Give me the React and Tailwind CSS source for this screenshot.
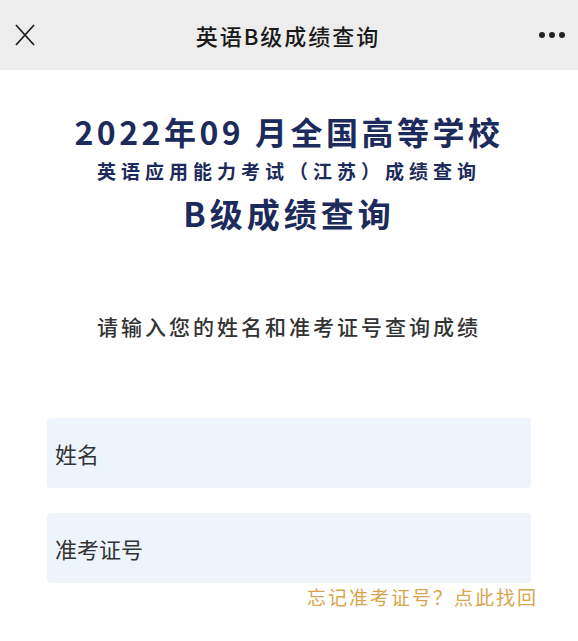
import React from "react";

const cjk = { fontFamily: '"Noto Sans CJK SC", "Noto Sans", sans-serif' };

export default function App() {
  return (
    <div className="w-[578px] h-[641px] bg-white overflow-hidden" style={cjk}>
      {/* top bar */}
      <div className="h-[70px] bg-[#ededed] flex items-center justify-between px-3">
        <svg width="24" height="24" viewBox="0 0 24 24" className="ml-[1px]">
          <path d="M3 2 L21 22 M21 2 L3 22" stroke="#222" strokeWidth="1.8" fill="none" />
        </svg>
        <div className="text-[22px] tracking-[2px] text-[#1a1a1a] font-medium">英语B级成绩查询</div>
        <div className="flex gap-[4px] items-center mr-[1px]">
          <span className="w-[6px] h-[6px] rounded-full bg-[#222]"></span>
          <span className="w-[6px] h-[6px] rounded-full bg-[#222]"></span>
          <span className="w-[6px] h-[6px] rounded-full bg-[#222]"></span>
        </div>
      </div>

      {/* heading */}
      <div className="flex flex-col items-center text-[#1c2a5c] font-bold">
        <div className="mt-[41px] text-[32px] leading-[40px] tracking-[3.5px]">2022年09 月全国高等学校</div>
        <div className="mt-[6px] text-[19px] leading-[28px] tracking-[5px]">英语应用能力考试（江苏）成绩查询</div>
        <div className="mt-[8px] text-[33px] leading-[40px] tracking-[4px]">B级成绩查询</div>
      </div>

      <div className="mt-[78px] text-center text-[21px] leading-[30px] tracking-[3px] text-[#333] font-medium">
        请输入您的姓名和准考证号查询成绩
      </div>

      {/* form */}
      <div className="mt-[77px] px-[47px] flex flex-col gap-[25px]">
        <div className="h-[70px] rounded-[4px] bg-[#edf4fc] flex items-center px-[8px] text-[22px] text-[#333]">姓名</div>
        <div className="h-[70px] rounded-[4px] bg-[#edf4fc] flex items-center px-[8px] text-[22px] text-[#333]">准考证号</div>
      </div>
      <div className="mt-[2px] pr-[40px] text-right text-[19px] leading-[24px] tracking-[2px] text-[#d8a54c]">
        忘记准考证号？点此找回
      </div>
    </div>
  );
}
